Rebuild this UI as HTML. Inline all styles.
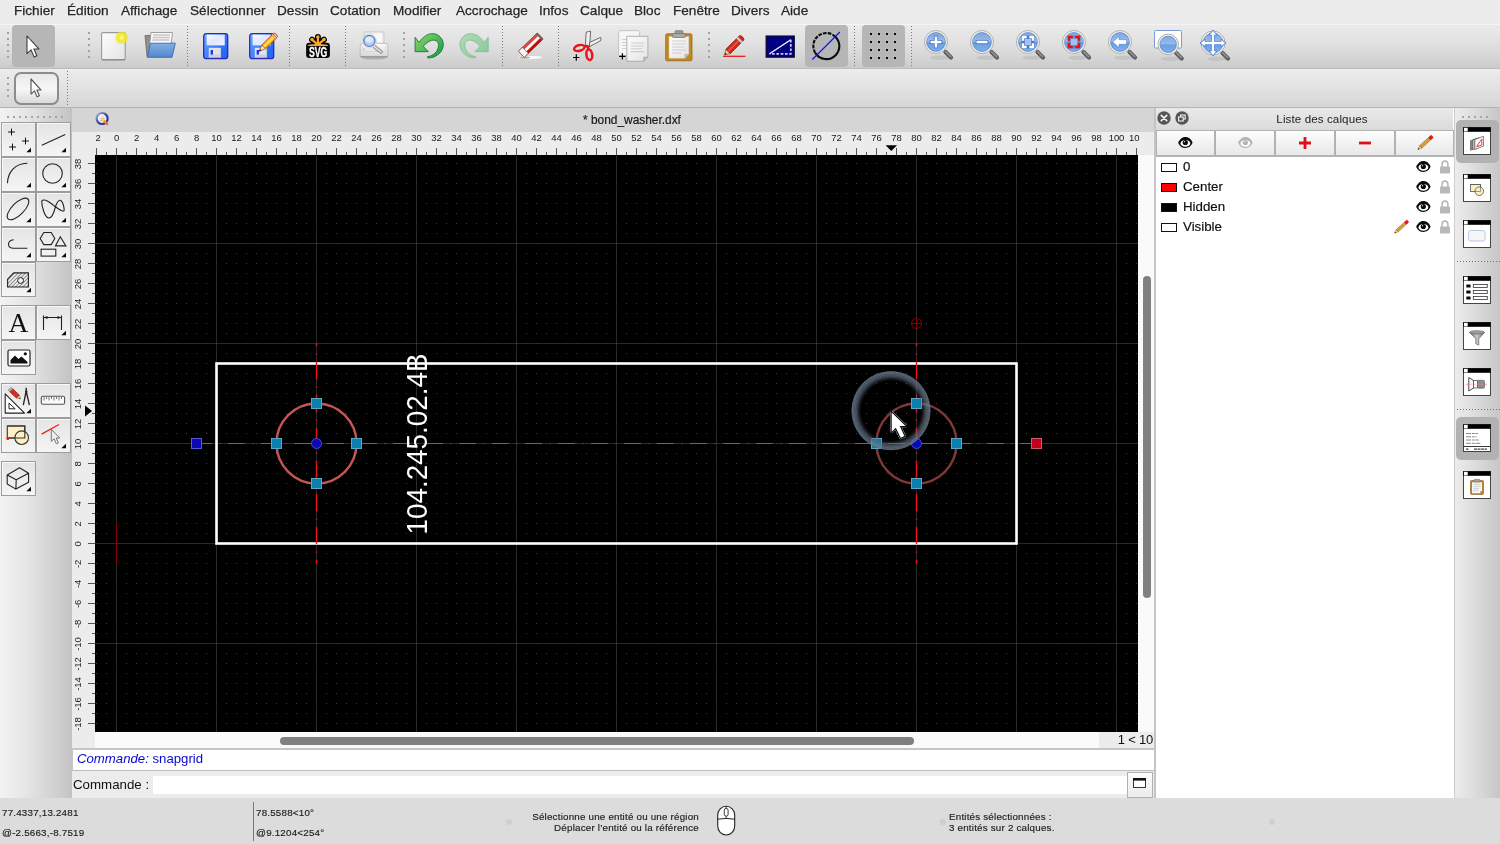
<!DOCTYPE html>
<html><head><meta charset="utf-8"><title>QCAD</title>
<style>
*{box-sizing:border-box;margin:0;padding:0}
html,body{width:1500px;height:844px;overflow:hidden;background:#ececec;font-family:"Liberation Sans",sans-serif;color:#262626}
.abs{position:absolute}
#root{position:absolute;left:0;top:0;width:1500px;height:844px;overflow:hidden;will-change:transform;-webkit-font-smoothing:antialiased}
#menubar{left:0;top:0;width:1500px;height:24px;background:#ececec}
.mi{position:absolute;top:2px;height:18px;line-height:18px;font-size:13.6px;color:#262626;white-space:nowrap;-webkit-text-stroke:0.25px #262626}
#tb1{left:0;top:24px;width:1500px;height:44px;background:linear-gradient(#ebebeb,#e2e2e2 40%,#d4d4d4 80%,#cacaca)}
#tb1b{left:0;top:68px;width:1500px;height:1px;background:#bdbdbd}
#tb2{left:0;top:69px;width:1500px;height:38px;background:linear-gradient(#ececec,#e4e4e4 40%,#d6d6d6)}
#tb2b{left:0;top:107px;width:1500px;height:1px;background:#b4b4b4}
.selbtn{position:absolute;background:#b6b6b6;border-radius:4px}
.vdots{position:absolute;width:1px;background-image:linear-gradient(#7a7a7a 1px,transparent 1px);background-size:1px 3px}
.hdl{position:absolute;width:2px;background-image:linear-gradient(#a2a2a2 2px,transparent 2px);background-size:2px 6px}
#leftp{left:0;top:108px;width:72px;height:690px;background:linear-gradient(90deg,#f3f3f3,#e6e6e6 35%,#cfcfcf 80%,#c2c2c2)}
.tbtn{position:absolute;width:35px;height:35px;background:linear-gradient(#e4e4e4,#ececec 45%,#f5f5f5);border:1px solid #9c9c9c;box-shadow:inset 1px 1px 0 #f8f8f8}
#tabbar{left:72px;top:108px;width:1082px;height:24px;background:#d5d5d5}
#hruler{left:72px;top:132px;width:1082px;height:23px;background:#ececec;overflow:hidden}
#vruler{left:72px;top:155px;width:23px;height:577px;background:#ececec;overflow:hidden}
#canvas{left:95px;top:155px;width:1043px;height:577px;background:#000;overflow:hidden}
#vscroll{left:1138px;top:155px;width:16px;height:577px;background:#fafafa}
#hscroll{left:95px;top:732px;width:1059px;height:16px;background:#fafafa}
#status{left:0;top:798px;width:1500px;height:46px;background:#dcdcdc}
.st{position:absolute;font-size:9.8px;color:#1c1c1c;white-space:nowrap;line-height:12px;letter-spacing:0.2px;-webkit-text-stroke:0.15px #1c1c1c}
#rightp{left:1455px;top:108px;width:45px;height:690px;background:linear-gradient(90deg,#ececec,#dedede 40%,#c6c6c6)}
#layers{left:1156px;top:108px;width:298px;height:690px;background:#fff}

.rl{position:absolute;font-size:9.5px;color:#1a1a1a;line-height:10px;white-space:nowrap;letter-spacing:-0.15px}

.lbtn{position:absolute;top:130px;height:26px;border:1px solid #b2b2b2;background:linear-gradient(#fdfdfd,#f0f0f0 60%,#e9e9e9)}
.ln{position:absolute;left:1183px;font-size:13.3px;color:#111;-webkit-text-stroke:0.2px #111;line-height:18px;height:18px;white-space:nowrap}
</style></head>
<body><div id="root">
<div id="menubar" class="abs">
<span class="mi" style="left:14px">Fichier</span>
<span class="mi" style="left:67px">Édition</span>
<span class="mi" style="left:121px">Affichage</span>
<span class="mi" style="left:190px">Sélectionner</span>
<span class="mi" style="left:277px">Dessin</span>
<span class="mi" style="left:330px">Cotation</span>
<span class="mi" style="left:393px">Modifier</span>
<span class="mi" style="left:456px">Accrochage</span>
<span class="mi" style="left:539px">Infos</span>
<span class="mi" style="left:580px">Calque</span>
<span class="mi" style="left:634px">Bloc</span>
<span class="mi" style="left:673px">Fenêtre</span>
<span class="mi" style="left:731px">Divers</span>
<span class="mi" style="left:781px">Aide</span>
</div>
<div id="tb1" class="abs"></div><div id="tb1b" class="abs"></div><div class="abs" style="left:0;top:24px;width:1500px;height:1px;background:#f5f5f5"></div>
<div id="tb2" class="abs"></div><div id="tb2b" class="abs"></div>
<div class="selbtn" style="left:12px;top:25px;width:43px;height:42px"></div>
<div class="selbtn" style="left:805px;top:25px;width:43px;height:42px"></div>
<div class="selbtn" style="left:862px;top:25px;width:43px;height:42px"></div>
<div class="hdl" style="left:7px;top:32px;height:26px"></div>
<div class="hdl" style="left:88px;top:32px;height:26px"></div>
<div class="hdl" style="left:403px;top:32px;height:26px"></div>
<div class="hdl" style="left:708px;top:32px;height:26px"></div>
<div class="hdl" style="left:7px;top:77px;height:20px"></div>
<div class="vdots" style="left:187px;top:26px;height:40px"></div>
<div class="vdots" style="left:289px;top:26px;height:40px"></div>
<div class="vdots" style="left:345px;top:26px;height:40px"></div>
<div class="vdots" style="left:502px;top:26px;height:40px"></div>
<div class="vdots" style="left:558px;top:26px;height:40px"></div>
<div class="vdots" style="left:854px;top:26px;height:40px"></div>
<div class="vdots" style="left:911px;top:26px;height:40px"></div>
<div class="vdots" style="left:67px;top:71px;height:34px"></div>
<div class="abs" style="left:14px;top:72px;width:45px;height:33px;border:2px solid #8c8c8c;border-radius:7px;background:linear-gradient(#e8e8e8,#f7f7f7 52%,#dadada)"></div>
<div id="leftp" class="abs"></div>
<div id="rightp" class="abs"></div>
<div class="abs" style="left:1454px;top:108px;width:1px;height:690px;background:#cccccc"></div>
<div id="layers" class="abs"></div>
<div class="abs" style="left:1154px;top:108px;width:2px;height:690px;background:#c4c4c4"></div>
<div id="tabbar" class="abs"></div>
<div id="hruler" class="abs"></div>
<div id="vruler" class="abs"></div>
<div id="vscroll" class="abs"></div>
<div id="hscroll" class="abs"></div>
<div id="canvas" class="abs"></div>
<div id="status" class="abs"></div>
<svg class="abs" style="left:95px;top:155px" width="1043" height="577" viewBox="95 155 1043 577">
<defs><pattern id="gd" x="96" y="163" width="10" height="10" patternUnits="userSpaceOnUse"><rect x="0" y="0" width="1" height="1" fill="#3c3c3c"/></pattern></defs>
<rect x="95" y="155" width="1043" height="577" fill="#000"/>
<rect x="116" y="155" width="1" height="577" fill="#282828"/>
<rect x="216" y="155" width="1" height="577" fill="#282828"/>
<rect x="316" y="155" width="1" height="577" fill="#282828"/>
<rect x="416" y="155" width="1" height="577" fill="#282828"/>
<rect x="516" y="155" width="1" height="577" fill="#282828"/>
<rect x="616" y="155" width="1" height="577" fill="#282828"/>
<rect x="716" y="155" width="1" height="577" fill="#282828"/>
<rect x="816" y="155" width="1" height="577" fill="#282828"/>
<rect x="916" y="155" width="1" height="577" fill="#282828"/>
<rect x="1016" y="155" width="1" height="577" fill="#282828"/>
<rect x="1116" y="155" width="1" height="577" fill="#282828"/>
<rect x="95" y="243" width="1043" height="1" fill="#282828"/>
<rect x="95" y="343" width="1043" height="1" fill="#282828"/>
<rect x="95" y="443" width="1043" height="1" fill="#282828"/>
<rect x="95" y="543" width="1043" height="1" fill="#282828"/>
<rect x="95" y="643" width="1043" height="1" fill="#282828"/>
<rect x="95" y="155" width="1043" height="577" fill="url(#gd)"/>
<rect x="96" y="543" width="40" height="1" fill="#8e0000"/><rect x="116" y="523" width="1" height="40" fill="#8e0000"/>
<rect x="216.5" y="363.5" width="800" height="180" fill="none" stroke="#fff" stroke-width="2.6"/>
<path d="M195 443.5H1037" stroke="#a05050" stroke-width="1" stroke-dasharray="17 7.5 1 7.5" fill="none"/>
<path d="M316.5 343V564" stroke="#f01018" stroke-width="1.4" stroke-dasharray="17.5 7.250 1.200 7.050" stroke-dashoffset="14.300" fill="none"/>
<path d="M916.5 343V564" stroke="#f01018" stroke-width="1.4" stroke-dasharray="17.5 7.250 1.200 7.050" stroke-dashoffset="14.300" fill="none"/>
<circle cx="316.5" cy="443.5" r="40" fill="none" stroke="#c65654" stroke-width="2.4"/>
<circle cx="916.5" cy="443.5" r="40" fill="none" stroke="#7e3937" stroke-width="2.4"/>
<text transform="translate(426.5 534.5) rotate(-90)" font-family="Liberation Sans, sans-serif" font-size="29" fill="#fff" textLength="181" lengthAdjust="spacingAndGlyphs">104.245.02.4B</text>
<g stroke="#860000" stroke-width="1" fill="none"><circle cx="916.5" cy="323.5" r="5"/><path d="M911.500 323.500h10M916.500 318.500v10"/></g>
<rect x="311.5" y="398.5" width="10" height="10" fill="#0d7fae" stroke="#5aa8c8" stroke-width="1"/>
<rect x="311.5" y="478.5" width="10" height="10" fill="#0d7fae" stroke="#5aa8c8" stroke-width="1"/>
<rect x="271.5" y="438.5" width="10" height="10" fill="#0d7fae" stroke="#5aa8c8" stroke-width="1"/>
<rect x="351.5" y="438.5" width="10" height="10" fill="#0d7fae" stroke="#5aa8c8" stroke-width="1"/>
<circle cx="316.5" cy="443.5" r="5" fill="#0a0ab4" stroke="#4a4ac8" stroke-width="1"/>
<rect x="911.5" y="398.5" width="10" height="10" fill="#0d7fae" stroke="#5aa8c8" stroke-width="1"/>
<rect x="911.5" y="478.5" width="10" height="10" fill="#0d7fae" stroke="#5aa8c8" stroke-width="1"/>
<rect x="871.5" y="438.5" width="10" height="10" fill="#0d7fae" stroke="#5aa8c8" stroke-width="1"/>
<rect x="951.5" y="438.5" width="10" height="10" fill="#0d7fae" stroke="#5aa8c8" stroke-width="1"/>
<circle cx="916.5" cy="443.5" r="5" fill="#0a0ab4" stroke="#4a4ac8" stroke-width="1"/>
<rect x="191.5" y="438.5" width="10" height="10" fill="#0a0ab4" stroke="#5a5ad0" stroke-width="1"/>
<rect x="1031.5" y="438.5" width="10" height="10" fill="#c2001e" stroke="#d05868" stroke-width="1"/>
<defs><radialGradient id="rg" cx="50%" cy="50%" r="50%"><stop offset="0.74" stop-color="#4a5a6a" stop-opacity="0"/><stop offset="0.80" stop-color="#4a5a6a" stop-opacity="0.3"/><stop offset="0.86" stop-color="#506070" stop-opacity="0.6"/><stop offset="0.92" stop-color="#5a6a7a" stop-opacity="0.7"/><stop offset="0.968" stop-color="#5c6c7e" stop-opacity="0.72"/><stop offset="0.985" stop-color="#566678" stop-opacity="0.65"/><stop offset="1" stop-color="#4a5a6a" stop-opacity="0"/></radialGradient></defs>
<circle cx="891" cy="410.7" r="40" fill="url(#rg)"/>
<circle cx="891" cy="410.7" r="38.7" fill="none" stroke="#a4b4c4" stroke-width="0.500" opacity="0.5"/>
<circle cx="891" cy="410.7" r="37.4" fill="none" stroke="#a4b4c4" stroke-width="0.500" opacity="0.45"/>
<circle cx="891" cy="410.7" r="36" fill="none" stroke="#a4b4c4" stroke-width="0.500" opacity="0.4"/>
<circle cx="891" cy="410.7" r="34.6" fill="none" stroke="#a4b4c4" stroke-width="0.500" opacity="0.3"/>
<circle cx="891" cy="410.7" r="33.2" fill="none" stroke="#a4b4c4" stroke-width="0.500" opacity="0.2"/>
<path d="M891.700 412.600V431.700L895.800 427.700L900.700 437.800L904.400 436.100L899.700 425.900H905.600Z" fill="none" stroke="#c8c8c8" stroke-width="2.900" stroke-linejoin="round"/>
<path d="M891.700 412.600V431.700L895.800 427.700L900.700 437.800L904.400 436.100L899.700 425.900H905.600Z" fill="#fff" stroke="#0a0a0a" stroke-width="2.300" stroke-linejoin="miter"/>
<path d="M891.700 412.600V431.700L895.800 427.700L900.700 437.800L904.400 436.100L899.700 425.900H905.600Z" fill="#fff"/>
</svg>
<svg class="abs" style="left:72px;top:132px" width="1066" height="23" viewBox="72 132 1066 23">
<path d="M96.5 148V155M106.5 152V155M116.5 148V155M126.5 152V155M136.5 148V155M146.5 152V155M156.5 148V155M166.5 152V155M176.5 148V155M186.5 152V155M196.5 148V155M206.5 152V155M216.5 148V155M226.5 152V155M236.5 148V155M246.5 152V155M256.5 148V155M266.5 152V155M276.5 148V155M286.5 152V155M296.5 148V155M306.5 152V155M316.5 148V155M326.5 152V155M336.5 148V155M346.5 152V155M356.5 148V155M366.5 152V155M376.5 148V155M386.5 152V155M396.5 148V155M406.5 152V155M416.5 148V155M426.5 152V155M436.5 148V155M446.5 152V155M456.5 148V155M466.5 152V155M476.5 148V155M486.5 152V155M496.5 148V155M506.5 152V155M516.5 148V155M526.5 152V155M536.5 148V155M546.5 152V155M556.5 148V155M566.5 152V155M576.5 148V155M586.5 152V155M596.5 148V155M606.5 152V155M616.5 148V155M626.5 152V155M636.5 148V155M646.5 152V155M656.5 148V155M666.5 152V155M676.5 148V155M686.5 152V155M696.5 148V155M706.5 152V155M716.5 148V155M726.5 152V155M736.5 148V155M746.5 152V155M756.5 148V155M766.5 152V155M776.5 148V155M786.5 152V155M796.5 148V155M806.5 152V155M816.5 148V155M826.5 152V155M836.5 148V155M846.5 152V155M856.5 148V155M866.5 152V155M876.5 148V155M886.5 152V155M896.5 148V155M906.5 152V155M916.5 148V155M926.5 152V155M936.5 148V155M946.5 152V155M956.5 148V155M966.5 152V155M976.5 148V155M986.5 152V155M996.5 148V155M1006.5 152V155M1016.5 148V155M1026.5 152V155M1036.5 148V155M1046.5 152V155M1056.5 148V155M1066.5 152V155M1076.5 148V155M1086.5 152V155M1096.5 148V155M1106.5 152V155M1116.5 148V155M1126.5 152V155M1136.5 148V155" stroke="#555" stroke-width="1" fill="none"/>
</svg>
<div class="rl" style="left:86.0px;top:132.5px;width:24px;text-align:center">2</div>
<div class="rl" style="left:104.5px;top:132.5px;width:24px;text-align:center">0</div>
<div class="rl" style="left:124.5px;top:132.5px;width:24px;text-align:center">2</div>
<div class="rl" style="left:144.5px;top:132.5px;width:24px;text-align:center">4</div>
<div class="rl" style="left:164.5px;top:132.5px;width:24px;text-align:center">6</div>
<div class="rl" style="left:184.5px;top:132.5px;width:24px;text-align:center">8</div>
<div class="rl" style="left:204.5px;top:132.5px;width:24px;text-align:center">10</div>
<div class="rl" style="left:224.5px;top:132.5px;width:24px;text-align:center">12</div>
<div class="rl" style="left:244.5px;top:132.5px;width:24px;text-align:center">14</div>
<div class="rl" style="left:264.5px;top:132.5px;width:24px;text-align:center">16</div>
<div class="rl" style="left:284.5px;top:132.5px;width:24px;text-align:center">18</div>
<div class="rl" style="left:304.5px;top:132.5px;width:24px;text-align:center">20</div>
<div class="rl" style="left:324.5px;top:132.5px;width:24px;text-align:center">22</div>
<div class="rl" style="left:344.5px;top:132.5px;width:24px;text-align:center">24</div>
<div class="rl" style="left:364.5px;top:132.5px;width:24px;text-align:center">26</div>
<div class="rl" style="left:384.5px;top:132.5px;width:24px;text-align:center">28</div>
<div class="rl" style="left:404.5px;top:132.5px;width:24px;text-align:center">30</div>
<div class="rl" style="left:424.5px;top:132.5px;width:24px;text-align:center">32</div>
<div class="rl" style="left:444.5px;top:132.5px;width:24px;text-align:center">34</div>
<div class="rl" style="left:464.5px;top:132.5px;width:24px;text-align:center">36</div>
<div class="rl" style="left:484.5px;top:132.5px;width:24px;text-align:center">38</div>
<div class="rl" style="left:504.5px;top:132.5px;width:24px;text-align:center">40</div>
<div class="rl" style="left:524.5px;top:132.5px;width:24px;text-align:center">42</div>
<div class="rl" style="left:544.5px;top:132.5px;width:24px;text-align:center">44</div>
<div class="rl" style="left:564.5px;top:132.5px;width:24px;text-align:center">46</div>
<div class="rl" style="left:584.5px;top:132.5px;width:24px;text-align:center">48</div>
<div class="rl" style="left:604.5px;top:132.5px;width:24px;text-align:center">50</div>
<div class="rl" style="left:624.5px;top:132.5px;width:24px;text-align:center">52</div>
<div class="rl" style="left:644.5px;top:132.5px;width:24px;text-align:center">54</div>
<div class="rl" style="left:664.5px;top:132.5px;width:24px;text-align:center">56</div>
<div class="rl" style="left:684.5px;top:132.5px;width:24px;text-align:center">58</div>
<div class="rl" style="left:704.5px;top:132.5px;width:24px;text-align:center">60</div>
<div class="rl" style="left:724.5px;top:132.5px;width:24px;text-align:center">62</div>
<div class="rl" style="left:744.5px;top:132.5px;width:24px;text-align:center">64</div>
<div class="rl" style="left:764.5px;top:132.5px;width:24px;text-align:center">66</div>
<div class="rl" style="left:784.5px;top:132.5px;width:24px;text-align:center">68</div>
<div class="rl" style="left:804.5px;top:132.5px;width:24px;text-align:center">70</div>
<div class="rl" style="left:824.5px;top:132.5px;width:24px;text-align:center">72</div>
<div class="rl" style="left:844.5px;top:132.5px;width:24px;text-align:center">74</div>
<div class="rl" style="left:864.5px;top:132.5px;width:24px;text-align:center">76</div>
<div class="rl" style="left:884.5px;top:132.5px;width:24px;text-align:center">78</div>
<div class="rl" style="left:904.5px;top:132.5px;width:24px;text-align:center">80</div>
<div class="rl" style="left:924.5px;top:132.5px;width:24px;text-align:center">82</div>
<div class="rl" style="left:944.5px;top:132.5px;width:24px;text-align:center">84</div>
<div class="rl" style="left:964.5px;top:132.5px;width:24px;text-align:center">86</div>
<div class="rl" style="left:984.5px;top:132.5px;width:24px;text-align:center">88</div>
<div class="rl" style="left:1004.5px;top:132.5px;width:24px;text-align:center">90</div>
<div class="rl" style="left:1024.5px;top:132.5px;width:24px;text-align:center">92</div>
<div class="rl" style="left:1044.5px;top:132.5px;width:24px;text-align:center">94</div>
<div class="rl" style="left:1064.5px;top:132.5px;width:24px;text-align:center">96</div>
<div class="rl" style="left:1084.5px;top:132.5px;width:24px;text-align:center">98</div>
<div class="rl" style="left:1104.5px;top:132.5px;width:24px;text-align:center">100</div>
<div class="rl" style="left:1129.0px;top:132.5px;width:24px;text-align:left">10</div>
<svg class="abs" style="left:72px;top:155px" width="23" height="577" viewBox="72 155 23 577">
<path d="M88 723.5H95M92 713.5H95M88 703.5H95M92 693.5H95M88 683.5H95M92 673.5H95M88 663.5H95M92 653.5H95M88 643.5H95M92 633.5H95M88 623.5H95M92 613.5H95M88 603.5H95M92 593.5H95M88 583.5H95M92 573.5H95M88 563.5H95M92 553.5H95M88 543.5H95M92 533.5H95M88 523.5H95M92 513.5H95M88 503.5H95M92 493.5H95M88 483.5H95M92 473.5H95M88 463.5H95M92 453.5H95M88 443.5H95M92 433.5H95M88 423.5H95M92 413.5H95M88 403.5H95M92 393.5H95M88 383.5H95M92 373.5H95M88 363.5H95M92 353.5H95M88 343.5H95M92 333.5H95M88 323.5H95M92 313.5H95M88 303.5H95M92 293.5H95M88 283.5H95M92 273.5H95M88 263.5H95M92 253.5H95M88 243.5H95M92 233.5H95M88 223.5H95M92 213.5H95M88 203.5H95M92 193.5H95M88 183.5H95M92 173.5H95M88 163.5H95" stroke="#555" stroke-width="1" fill="none"/>
<path d="M85 405.5L92 411L85 416.5Z" fill="#000"/>
</svg>
<div class="rl" style="left:66px;top:718.5px;width:24px;height:10px;text-align:center;transform:rotate(-90deg)">-18</div>
<div class="rl" style="left:66px;top:698.5px;width:24px;height:10px;text-align:center;transform:rotate(-90deg)">-16</div>
<div class="rl" style="left:66px;top:678.5px;width:24px;height:10px;text-align:center;transform:rotate(-90deg)">-14</div>
<div class="rl" style="left:66px;top:658.5px;width:24px;height:10px;text-align:center;transform:rotate(-90deg)">-12</div>
<div class="rl" style="left:66px;top:638.5px;width:24px;height:10px;text-align:center;transform:rotate(-90deg)">-10</div>
<div class="rl" style="left:66px;top:618.5px;width:24px;height:10px;text-align:center;transform:rotate(-90deg)">-8</div>
<div class="rl" style="left:66px;top:598.5px;width:24px;height:10px;text-align:center;transform:rotate(-90deg)">-6</div>
<div class="rl" style="left:66px;top:578.5px;width:24px;height:10px;text-align:center;transform:rotate(-90deg)">-4</div>
<div class="rl" style="left:66px;top:558.5px;width:24px;height:10px;text-align:center;transform:rotate(-90deg)">-2</div>
<div class="rl" style="left:66px;top:538.5px;width:24px;height:10px;text-align:center;transform:rotate(-90deg)">0</div>
<div class="rl" style="left:66px;top:518.5px;width:24px;height:10px;text-align:center;transform:rotate(-90deg)">2</div>
<div class="rl" style="left:66px;top:498.5px;width:24px;height:10px;text-align:center;transform:rotate(-90deg)">4</div>
<div class="rl" style="left:66px;top:478.5px;width:24px;height:10px;text-align:center;transform:rotate(-90deg)">6</div>
<div class="rl" style="left:66px;top:458.5px;width:24px;height:10px;text-align:center;transform:rotate(-90deg)">8</div>
<div class="rl" style="left:66px;top:438.5px;width:24px;height:10px;text-align:center;transform:rotate(-90deg)">10</div>
<div class="rl" style="left:66px;top:418.5px;width:24px;height:10px;text-align:center;transform:rotate(-90deg)">12</div>
<div class="rl" style="left:66px;top:398.5px;width:24px;height:10px;text-align:center;transform:rotate(-90deg)">14</div>
<div class="rl" style="left:66px;top:378.5px;width:24px;height:10px;text-align:center;transform:rotate(-90deg)">16</div>
<div class="rl" style="left:66px;top:358.5px;width:24px;height:10px;text-align:center;transform:rotate(-90deg)">18</div>
<div class="rl" style="left:66px;top:338.5px;width:24px;height:10px;text-align:center;transform:rotate(-90deg)">20</div>
<div class="rl" style="left:66px;top:318.5px;width:24px;height:10px;text-align:center;transform:rotate(-90deg)">22</div>
<div class="rl" style="left:66px;top:298.5px;width:24px;height:10px;text-align:center;transform:rotate(-90deg)">24</div>
<div class="rl" style="left:66px;top:278.5px;width:24px;height:10px;text-align:center;transform:rotate(-90deg)">26</div>
<div class="rl" style="left:66px;top:258.5px;width:24px;height:10px;text-align:center;transform:rotate(-90deg)">28</div>
<div class="rl" style="left:66px;top:238.5px;width:24px;height:10px;text-align:center;transform:rotate(-90deg)">30</div>
<div class="rl" style="left:66px;top:218.5px;width:24px;height:10px;text-align:center;transform:rotate(-90deg)">32</div>
<div class="rl" style="left:66px;top:198.5px;width:24px;height:10px;text-align:center;transform:rotate(-90deg)">34</div>
<div class="rl" style="left:66px;top:178.5px;width:24px;height:10px;text-align:center;transform:rotate(-90deg)">36</div>
<div class="rl" style="left:66px;top:158.5px;width:24px;height:10px;text-align:center;transform:rotate(-90deg)">38</div>
<svg class="abs" style="left:880px;top:144px" width="20" height="8"><path d="M5.600 1.200H17L11.300 6.900Z" fill="#000"/></svg>
<div class="abs" style="left:1143px;top:276px;width:8px;height:322px;border-radius:4px;background:#808080"></div>
<div class="abs" style="left:280px;top:737px;width:634px;height:8px;border-radius:4px;background:#808080"></div>
<div class="abs" style="left:72px;top:732px;width:23px;height:16px;background:#ececec"></div>
<div class="abs" style="left:1099px;top:732px;width:55px;height:16px;background:#ececec"></div>
<div class="abs" style="left:1099px;top:732px;width:54px;height:16px;line-height:16px;text-align:right;font-size:13px;color:#111;letter-spacing:-0.2px">1 &lt; 10</div>
<div class="abs" style="left:72px;top:748px;width:1082px;height:2px;background:#c6c6c6"></div>
<div class="abs" style="left:73px;top:750px;width:1081px;height:20px;background:#fff"></div>
<div class="abs" style="left:72px;top:750px;width:1px;height:21px;background:#c6c6c6"></div>
<div class="abs" style="left:77px;top:750px;height:17px;line-height:17px;font-size:13.2px;color:#0808d0;white-space:nowrap"><i>Commande:</i> snapgrid</div>
<div class="abs" style="left:72px;top:770px;width:1082px;height:1px;background:#bcbcbc"></div>
<div class="abs" style="left:72px;top:771px;width:1082px;height:27px;background:#ececec"></div>
<div class="abs" style="left:73px;top:776px;height:18px;line-height:18px;font-size:13.3px;color:#111;white-space:nowrap">Commande :</div>
<div class="abs" style="left:153px;top:776px;width:975px;height:18px;background:#fff"></div>
<div class="abs" style="left:1127px;top:772px;width:26px;height:26px;border:1px solid #b0b0b0;background:linear-gradient(#fbfbfb,#ededed)"></div>
<svg class="abs" style="left:1132px;top:777px" width="16" height="14"><rect x="1.500" y="1.500" width="12" height="9" fill="#fff" stroke="#222" stroke-width="0.900"/><rect x="1" y="1" width="13" height="2.600" fill="#111"/></svg>
<div class="st" style="left:2px;top:807px">77.4337,13.2481</div>
<div class="st" style="left:2px;top:827px">@-2.5663,-8.7519</div>
<div class="abs" style="left:253px;top:802px;width:1px;height:39px;background:#787878"></div>
<div class="st" style="left:256px;top:807px">78.5588&lt;10°</div>
<div class="st" style="left:256px;top:827px">@9.1204&lt;254°</div>
<div class="st" style="left:400px;top:811px;width:299px;text-align:right;line-height:11px">Sélectionne une entité ou une région<br>Déplacer l’entité ou la référence</div>
<div class="st" style="left:949px;top:811px;line-height:11px">Entités sélectionnées :<br>3 entités sur 2 calques.</div>
<div class="abs" style="left:506px;top:819px;width:6px;height:6px;border-radius:3px;background:#cfcfcf"></div>
<div class="abs" style="left:940px;top:819px;width:6px;height:6px;border-radius:3px;background:#cfcfcf"></div>
<div class="abs" style="left:1269px;top:819px;width:6px;height:6px;border-radius:3px;background:#cfcfcf"></div>
<svg class="abs" style="left:716px;top:805px" width="22" height="32" viewBox="0 0 22 32"><rect x="1.700" y="1.300" width="17" height="28.700" rx="8.500" ry="9" fill="#fff" stroke="#222" stroke-width="1.100"/><path d="M1.700 14.200Q10.200 12.600 18.700 14.200" stroke="#222" stroke-width="1" fill="none"/><path d="M10.200 1.300V3.400M10.200 11.200V13.400" stroke="#222" stroke-width="0.900"/><rect x="8.300" y="3.400" width="3.800" height="7.800" rx="1.900" fill="#fff" stroke="#222" stroke-width="0.900"/></svg>
<div class="abs" style="left:72px;top:108px;width:1082px;height:24px;background:#d5d5d5"></div>
<div class="abs" style="left:500px;top:113px;width:264px;text-align:center;font-size:11.9px;line-height:15px;color:#1a1a1a;white-space:nowrap;-webkit-text-stroke:0.2px #1a1a1a">* bond_washer.dxf</div>
<svg class="abs" style="left:95px;top:111px" width="16" height="16" viewBox="0 0 16 16"><defs><linearGradient id="gq" x1="0" y1="0" x2="1" y2="1"><stop offset="0" stop-color="#b4c0e0"/><stop offset="0.45" stop-color="#3a4f9c"/><stop offset="1" stop-color="#1c3486"/></linearGradient></defs><circle cx="7.100" cy="7.500" r="5.500" fill="#f2f3f6" stroke="url(#gq)" stroke-width="2.200"/><path d="M7.100 4.200V10.800M3.800 7.500H10.400" stroke="#c0c4cc" stroke-width="0.700"/><path d="M4.500 9.500H7.500" stroke="#e8a0a0" stroke-width="0.700"/><path d="M7.800 5.300L8.400 6.500" stroke="#f0b0b0" stroke-width="0.800"/><path d="M7.500 8.300L11.300 12.100" stroke="#f2a010" stroke-width="2.300" stroke-linecap="round"/><path d="M7.300 8.100L8.300 9.100" stroke="#f8e080" stroke-width="1.600" stroke-linecap="round"/><path d="M11.300 12.100L12.300 13.100" stroke="#e06868" stroke-width="2.300" stroke-linecap="round"/></svg>
<div class="abs" style="left:1156px;top:108px;width:297px;height:23px;background:linear-gradient(#e9e9e9,#dadada)"></div>
<div class="abs" style="left:1156px;top:110.500px;width:297px;text-align:center;padding-left:35px;font-size:11.6px;line-height:15px;color:#222;white-space:nowrap;letter-spacing:0.1px">Liste des calques</div>
<svg class="abs" style="left:1156px;top:110px" width="36" height="16" viewBox="0 0 36 16"><circle cx="8" cy="8" r="6.7" fill="#555"/><path d="M5.3 5.3L10.7 10.7M10.7 5.3L5.3 10.7" stroke="#f2f2f2" stroke-width="1.7" stroke-linecap="round"/><circle cx="26" cy="8" r="6.7" fill="#555"/><rect x="24.6" y="5" width="4.6" height="4" fill="none" stroke="#f2f2f2" stroke-width="1.1"/><rect x="22.6" y="7" width="4.6" height="4" fill="#555" stroke="#f2f2f2" stroke-width="1.1"/></svg>
<div class="lbtn" style="left:1156px;width:59px"></div>
<div class="lbtn" style="left:1215px;width:60px"></div>
<div class="lbtn" style="left:1275px;width:60px"></div>
<div class="lbtn" style="left:1335px;width:60px"></div>
<div class="lbtn" style="left:1395px;width:59px"></div>
<div class="abs" style="left:1156px;top:156px;width:298px;height:1px;background:#b4b4b4"></div>
<svg class="abs" style="left:1177.700px;top:137.200px" width="15" height="12" viewBox="0 0 15 12"><path d="M0.2 5.900C1.800 1.800 4.800 0.100 7.400 0.100C10.200 0.100 13 1.900 14.600 5.600C13 9.600 10.200 11 7.400 11C4.600 11 1.800 9.600 0.200 5.900Z" fill="#0a0a0a"/><ellipse cx="7.400" cy="6.400" rx="4.900" ry="3.300" fill="#fff"/><circle cx="7.300" cy="5.500" r="2.600" fill="#0a0a0a"/><circle cx="6.500" cy="4.700" r="0.650" fill="#fff" opacity="0.800"/></svg>
<svg class="abs" style="left:1237.700px;top:137.200px" width="15" height="12" viewBox="0 0 15 12"><path d="M0.2 5.900C1.800 1.800 4.800 0.100 7.400 0.100C10.200 0.100 13 1.900 14.600 5.600C13 9.600 10.200 11 7.400 11C4.600 11 1.800 9.600 0.200 5.900Z" fill="#b4b4b4"/><ellipse cx="7.400" cy="6.400" rx="4.900" ry="3.300" fill="#fff"/><circle cx="7.300" cy="5.500" r="2.600" fill="#b4b4b4"/><circle cx="6.500" cy="4.700" r="0.650" fill="#fff" opacity="0.800"/></svg>
<svg class="abs" style="left:1298px;top:136px" width="14" height="14"><path d="M7 1V13M1 7H13" stroke="#e0101a" stroke-width="2.800"/></svg>
<svg class="abs" style="left:1358px;top:136px" width="14" height="14"><path d="M1 7H13" stroke="#e0101a" stroke-width="2.800"/></svg>
<svg class="abs" style="left:0;top:0;overflow:visible" width="1" height="1"><g transform="translate(1417.8 149.6) rotate(-42.500) scale(1)"><path d="M0 0L4.200 -1.650V1.650Z" fill="#ecd8a8" stroke="#7a5a14" stroke-width="0.500" stroke-linejoin="round"/><path d="M0 0L1.700 -0.700V0.700Z" fill="#3a2810"/><rect x="4.200" y="-1.650" width="11.800" height="3.300" fill="#dca544" stroke="#8a5e14" stroke-width="0.500"/><path d="M4.200 0H16" stroke="#c08828" stroke-width="0.600"/><rect x="16" y="-1.650" width="3.700" height="3.300" rx="0.800" fill="#f0141e" stroke="#a00a10" stroke-width="0.400"/></g></svg>
<div class="abs" style="left:1161px;top:163px;width:16px;height:9px;background:#fff;border:1px solid #111"></div>
<div class="ln" style="top:158px">0</div>
<svg class="abs" style="left:1415.600px;top:161.1px" width="15" height="12" viewBox="0 0 15 12"><path d="M0.2 5.900C1.800 1.800 4.800 0.100 7.400 0.100C10.200 0.100 13 1.900 14.600 5.600C13 9.600 10.200 11 7.400 11C4.600 11 1.800 9.600 0.200 5.900Z" fill="#0a0a0a"/><ellipse cx="7.400" cy="6.400" rx="4.900" ry="3.300" fill="#fff"/><circle cx="7.300" cy="5.500" r="2.600" fill="#0a0a0a"/><circle cx="6.500" cy="4.700" r="0.650" fill="#fff" opacity="0.800"/></svg>
<svg class="abs" style="left:1439px;top:160px" width="12" height="14" viewBox="0 0 12 14"><path d="M3.100 7V4.200C3.100 -0.200 8.900 -0.200 8.900 4.200V7" fill="none" stroke="#b4b4b4" stroke-width="1.500"/><rect x="1" y="6.5" width="10" height="7" rx="0.8" fill="#b8b8b8"/></svg>
<div class="abs" style="left:1161px;top:183px;width:16px;height:9px;background:#ff0000;border:1px solid #111"></div>
<div class="ln" style="top:178px">Center</div>
<svg class="abs" style="left:1415.600px;top:181.1px" width="15" height="12" viewBox="0 0 15 12"><path d="M0.2 5.900C1.800 1.800 4.800 0.100 7.400 0.100C10.200 0.100 13 1.900 14.600 5.600C13 9.600 10.200 11 7.400 11C4.600 11 1.800 9.600 0.200 5.900Z" fill="#0a0a0a"/><ellipse cx="7.400" cy="6.400" rx="4.900" ry="3.300" fill="#fff"/><circle cx="7.300" cy="5.500" r="2.600" fill="#0a0a0a"/><circle cx="6.500" cy="4.700" r="0.650" fill="#fff" opacity="0.800"/></svg>
<svg class="abs" style="left:1439px;top:180px" width="12" height="14" viewBox="0 0 12 14"><path d="M3.100 7V4.200C3.100 -0.200 8.900 -0.200 8.900 4.200V7" fill="none" stroke="#b4b4b4" stroke-width="1.500"/><rect x="1" y="6.5" width="10" height="7" rx="0.8" fill="#b8b8b8"/></svg>
<div class="abs" style="left:1161px;top:203px;width:16px;height:9px;background:#000;border:1px solid #111"></div>
<div class="ln" style="top:198px">Hidden</div>
<svg class="abs" style="left:1415.600px;top:201.1px" width="15" height="12" viewBox="0 0 15 12"><path d="M0.2 5.900C1.800 1.800 4.800 0.100 7.400 0.100C10.200 0.100 13 1.900 14.600 5.600C13 9.600 10.200 11 7.400 11C4.600 11 1.800 9.600 0.200 5.900Z" fill="#0a0a0a"/><ellipse cx="7.400" cy="6.400" rx="4.900" ry="3.300" fill="#fff"/><circle cx="7.300" cy="5.500" r="2.600" fill="#0a0a0a"/><circle cx="6.500" cy="4.700" r="0.650" fill="#fff" opacity="0.800"/></svg>
<svg class="abs" style="left:1439px;top:200px" width="12" height="14" viewBox="0 0 12 14"><path d="M3.100 7V4.200C3.100 -0.200 8.900 -0.200 8.900 4.200V7" fill="none" stroke="#b4b4b4" stroke-width="1.500"/><rect x="1" y="6.5" width="10" height="7" rx="0.8" fill="#b8b8b8"/></svg>
<div class="abs" style="left:1161px;top:223px;width:16px;height:9px;background:#fff;border:1px solid #111"></div>
<div class="ln" style="top:218px">Visible</div>
<svg class="abs" style="left:1415.600px;top:221.1px" width="15" height="12" viewBox="0 0 15 12"><path d="M0.2 5.900C1.800 1.800 4.800 0.100 7.400 0.100C10.200 0.100 13 1.900 14.600 5.600C13 9.600 10.200 11 7.400 11C4.600 11 1.800 9.600 0.200 5.900Z" fill="#0a0a0a"/><ellipse cx="7.400" cy="6.400" rx="4.900" ry="3.300" fill="#fff"/><circle cx="7.300" cy="5.500" r="2.600" fill="#0a0a0a"/><circle cx="6.500" cy="4.700" r="0.650" fill="#fff" opacity="0.800"/></svg>
<svg class="abs" style="left:1439px;top:220px" width="12" height="14" viewBox="0 0 12 14"><path d="M3.100 7V4.200C3.100 -0.200 8.900 -0.200 8.900 4.200V7" fill="none" stroke="#b4b4b4" stroke-width="1.500"/><rect x="1" y="6.5" width="10" height="7" rx="0.8" fill="#b8b8b8"/></svg>
<svg class="abs" style="left:0;top:0;overflow:visible" width="1" height="1"><g transform="translate(1394.5 233.2) rotate(-42.500) scale(0.92)"><path d="M0 0L4.200 -1.650V1.650Z" fill="#ecd8a8" stroke="#7a5a14" stroke-width="0.500" stroke-linejoin="round"/><path d="M0 0L1.700 -0.700V0.700Z" fill="#3a2810"/><rect x="4.200" y="-1.650" width="11.800" height="3.300" fill="#dca544" stroke="#8a5e14" stroke-width="0.500"/><path d="M4.200 0H16" stroke="#c08828" stroke-width="0.600"/><rect x="16" y="-1.650" width="3.700" height="3.300" rx="0.800" fill="#f0141e" stroke="#a00a10" stroke-width="0.400"/></g></svg>
<div class="abs" style="left:7px;top:116px;width:58px;height:2px;background-image:linear-gradient(90deg,#a4a4a4 2px,transparent 2px);background-size:6px 2px"></div>
<div class="tbtn" style="left:1px;top:122px"></div>
<svg class="abs" style="left:2px;top:122.5px" width="34" height="34" viewBox="0 0 34 34"><path d="M9.500 5.600v6.800M6.100 9h6.800M23.500 14.600v6.800M20.100 18h6.800M10.500 20.600v6.800M7.100 24h6.800" stroke="#111" stroke-width="1" fill="none"/><path d="M29 24.700V29.200H24.300Z" fill="#0a0a0a"/></svg>
<div class="tbtn" style="left:36px;top:122px"></div>
<svg class="abs" style="left:37px;top:122.5px" width="34" height="34" viewBox="0 0 34 34"><path d="M4.800 22.200L28.200 11.400" stroke="#222" stroke-width="1.1" fill="none"/><path d="M29 24.700V29.200H24.300Z" fill="#0a0a0a"/></svg>
<div class="tbtn" style="left:1px;top:157px"></div>
<svg class="abs" style="left:2px;top:157.5px" width="34" height="34" viewBox="0 0 34 34"><path transform="translate(-1 -1.200)" d="M6.5 26C7 15 14 7 26 6.5" stroke="#222" stroke-width="1.1" fill="none" stroke-linecap="round"/><path d="M29 24.700V29.200H24.300Z" fill="#0a0a0a"/></svg>
<div class="tbtn" style="left:36px;top:157px"></div>
<svg class="abs" style="left:37px;top:157.5px" width="34" height="34" viewBox="0 0 34 34"><circle cx="15.500" cy="15.500" r="9.800" stroke="#222" stroke-width="1.1" fill="none"/><path d="M29 24.700V29.200H24.300Z" fill="#0a0a0a"/></svg>
<div class="tbtn" style="left:1px;top:192px"></div>
<svg class="abs" style="left:2px;top:192.5px" width="34" height="34" viewBox="0 0 34 34"><ellipse cx="16" cy="15.900" rx="14" ry="6" transform="rotate(-45 16 15.900)" stroke="#222" stroke-width="1.1" fill="none"/><path d="M29 24.700V29.200H24.300Z" fill="#0a0a0a"/></svg>
<div class="tbtn" style="left:36px;top:192px"></div>
<svg class="abs" style="left:37px;top:192.5px" width="34" height="34" viewBox="0 0 34 34"><path transform="translate(0 -0.500)" d="M4.700 8.600C4.700 14.500 8 25.500 11.900 25.500C15.200 25.500 17.100 19.700 18.400 14.500C19.700 9.900 21.700 7.300 23.700 7.900C26.300 9.200 27.600 17.100 26.900 18.400C25.600 19.700 20.400 15.800 17.800 13.800C13.900 10.500 7.300 5.300 4.700 8.600Z" stroke="#222" stroke-width="1.1" fill="none"/><path d="M29 24.700V29.200H24.300Z" fill="#0a0a0a"/></svg>
<div class="tbtn" style="left:1px;top:227px"></div>
<svg class="abs" style="left:2px;top:227.5px" width="34" height="34" viewBox="0 0 34 34"><path d="M11.700 11.800C8 12 6.300 14.500 6.500 16.500C6.800 19 9 20.300 11.500 20.300H25.400" stroke="#222" stroke-width="1.1" fill="none"/><path d="M29 24.700V29.200H24.300Z" fill="#0a0a0a"/></svg>
<div class="tbtn" style="left:36px;top:227px"></div>
<svg class="abs" style="left:37px;top:227.5px" width="34" height="34" viewBox="0 0 34 34"><path d="M6.800 4.500H14.200L17.800 10.500L14.200 16.600H6.800L3.200 10.500Z" stroke="#222" stroke-width="1.1" fill="none"/><path d="M23.300 8.800L28.900 17.900H18.400Z" stroke="#222" stroke-width="1.1" fill="none"/><rect x="4.100" y="21.200" width="14.700" height="6.900" stroke="#222" stroke-width="1.1" fill="none"/><path d="M29 24.700V29.200H24.300Z" fill="#0a0a0a"/></svg>
<div class="tbtn" style="left:1px;top:262px"></div>
<svg class="abs" style="left:2px;top:262.5px" width="34" height="34" viewBox="0 0 34 34"><defs><pattern id="hp" width="2.600" height="2.600" patternUnits="userSpaceOnUse" patternTransform="rotate(45)"><rect width="0.800" height="2.600" fill="#7a7a7a"/></pattern></defs><path d="M5.600 24V16.200L11.700 9.900H26.400V24Z" fill="url(#hp)" stroke="#222" stroke-width="1.100"/><circle cx="18.600" cy="17.500" r="2.900" fill="#f2f2f2" stroke="#222" stroke-width="1"/><path d="M29 24.700V29.200H24.300Z" fill="#0a0a0a"/></svg>
<div class="tbtn" style="left:1px;top:305px"></div>
<svg class="abs" style="left:2px;top:305.5px" width="34" height="34" viewBox="0 0 34 34"><text x="16.500" y="26.300" text-anchor="middle" font-family="Liberation Serif, serif" font-size="27.500" fill="#111">A</text></svg>
<div class="tbtn" style="left:36px;top:305px"></div>
<svg class="abs" style="left:37px;top:305.5px" width="34" height="34" viewBox="0 0 34 34"><path d="M6.500 9.500V24M24.500 9.500V24M6.500 11.500H24.500" stroke="#222" stroke-width="1.100" fill="none"/><path d="M6.500 11.500L10.500 10V13ZM24.500 11.500L20.500 10V13Z" fill="#222"/><path d="M29 24.700V29.200H24.300Z" fill="#0a0a0a"/></svg>
<div class="tbtn" style="left:1px;top:340px"></div>
<svg class="abs" style="left:2px;top:340.5px" width="34" height="34" viewBox="0 0 34 34"><rect x="6" y="9" width="22" height="16" rx="1.5" fill="#fff" stroke="#222" stroke-width="1.2"/><path d="M8.5 22.5V19L13 14.5L16.5 18L19.5 15.5L25.5 21V22.5Z" fill="#111"/><circle cx="23.3" cy="12.8" r="1.6" fill="#111"/></svg>
<div class="tbtn" style="left:1px;top:383px"></div>
<svg class="abs" style="left:2px;top:383.5px" width="34" height="34" viewBox="0 0 34 34"><path d="M3.200 9.800V29.100H22.500Z" fill="#fff" stroke="#222" stroke-width="1.100" stroke-linejoin="round"/><path d="M7 19.100V24.800H13.200Z" fill="none" stroke="#222" stroke-width="1"/><g transform="translate(18.400 14.900) rotate(-137)"><path d="M0 0L3.600 -2.100V2.100Z" fill="#e8d0a0" stroke="#7a5a14" stroke-width="0.500"/><path d="M0 0L1.300 -0.800V0.800Z" fill="#333"/><rect x="3.600" y="-2.100" width="9" height="4.200" fill="#dc2a20" stroke="#7a1410" stroke-width="0.600"/><rect x="12.600" y="-2.100" width="2.400" height="4.200" fill="#b8b8b8" stroke="#666" stroke-width="0.400"/></g><path d="M24.200 3.800V7" stroke="#222" stroke-width="1.400" fill="none"/><circle cx="24.200" cy="7.600" r="1.200" fill="#222"/><path d="M24 8L21.300 21.200M24.400 8L27.400 21.200" stroke="#222" stroke-width="1.300" fill="none"/><path d="M29 24.700V29.200H24.300Z" fill="#0a0a0a"/></svg>
<div class="tbtn" style="left:36px;top:383px"></div>
<svg class="abs" style="left:37px;top:383.5px" width="34" height="34" viewBox="0 0 34 34"><rect x="4.300" y="12.300" width="23.300" height="8" rx="1.500" fill="#fafafa" stroke="#555" stroke-width="1.100"/><path d="M7 13v3.500M9.500 13v2M12 13v3.500M14.500 13v2M17 13v3.500M19.500 13v2M22 13v3.500M24.500 13v2" stroke="#555" stroke-width="0.800"/></svg>
<div class="tbtn" style="left:1px;top:418px"></div>
<svg class="abs" style="left:2px;top:418.5px" width="34" height="34" viewBox="0 0 34 34"><rect x="5.300" y="7" width="17.500" height="12" fill="#fdf0c4" stroke="#333" stroke-width="1.100"/><circle cx="19.700" cy="18.700" r="6.800" fill="#fdf0c4" stroke="#333" stroke-width="1.100"/><path d="M5.300 7H22.800V19H5.300" fill="none" stroke="#333" stroke-width="1.100"/><circle cx="5.800" cy="19.400" r="1.500" fill="#f01818"/></svg>
<div class="tbtn" style="left:36px;top:418px"></div>
<svg class="abs" style="left:37px;top:418.5px" width="34" height="34" viewBox="0 0 34 34"><path d="M4.600 15.100L22 5.500" stroke="#f02020" stroke-width="1.300" fill="none"/><path d="M14.300 10.300V22.300L17.100 19.800L19.300 24.800L21.400 23.800L19.200 19H22.800Z" fill="#eee" stroke="#777" stroke-width="1"/><path d="M29 24.700V29.200H24.300Z" fill="#0a0a0a"/></svg>
<div class="tbtn" style="left:1px;top:461px"></div>
<svg class="abs" style="left:2px;top:461.5px" width="34" height="34" viewBox="0 0 34 34"><path d="M5.200 13L17.500 5.800L26.600 11.200V20.300L13.900 27.100L5.200 22ZM5.200 13L14.200 17.700L26.600 11.200M14.200 17.700L13.900 27.100" fill="none" stroke="#222" stroke-width="1.100" stroke-linejoin="round"/><path d="M29 24.700V29.200H24.300Z" fill="#0a0a0a"/></svg>
<svg width="0" height="0" style="position:absolute"><defs><linearGradient id="gpaper" x1="0" y1="0" x2="1" y2="1"><stop offset="0" stop-color="#fdfdfd"/><stop offset="1" stop-color="#e4e4e4"/></linearGradient><linearGradient id="gfold" x1="0" y1="0" x2="0" y2="1"><stop offset="0" stop-color="#86b0e2"/><stop offset="1" stop-color="#5088d0"/></linearGradient><linearGradient id="gsave" x1="0" y1="0" x2="1" y2="0.6"><stop offset="0" stop-color="#86b6ff"/><stop offset="0.35" stop-color="#4a8cff"/><stop offset="1" stop-color="#2468f6"/></linearGradient><linearGradient id="glab" x1="0" y1="0" x2="1" y2="1"><stop offset="0" stop-color="#ffffff"/><stop offset="0.5" stop-color="#dfe6ff"/><stop offset="1" stop-color="#f4f6ff"/></linearGradient><linearGradient id="gundo" x1="0" y1="0" x2="1" y2="1"><stop offset="0" stop-color="#96d66e"/><stop offset="0.5" stop-color="#4fb85a"/><stop offset="1" stop-color="#1c963c"/></linearGradient><linearGradient id="gredo" x1="1" y1="0" x2="0" y2="1"><stop offset="0" stop-color="#b4dcb4"/><stop offset="1" stop-color="#86c69a"/></linearGradient><linearGradient id="glens" x1="0" y1="0" x2="0" y2="1"><stop offset="0" stop-color="#7fa6de"/><stop offset="0.48" stop-color="#9dbce8"/><stop offset="0.52" stop-color="#6a9ce0"/><stop offset="1" stop-color="#7cb2f0"/></linearGradient><radialGradient id="gglow"><stop offset="0" stop-color="#ffffd0"/><stop offset="0.35" stop-color="#f4ee30"/><stop offset="0.8" stop-color="#eee820" stop-opacity="0.75"/><stop offset="1" stop-color="#e8e020" stop-opacity="0"/></radialGradient><linearGradient id="gprn" x1="0" y1="0" x2="0" y2="1"><stop offset="0" stop-color="#fafafa"/><stop offset="0.6" stop-color="#e6e6e6"/><stop offset="1" stop-color="#d2d2d2"/></linearGradient></defs></svg>
<svg class="abs" style="left:27px;top:35.5px;overflow:visible" width="16" height="27" viewBox="0 0 16 27"><g transform="scale(0.82)"><path d="M0 0V21.500L5 17L8.600 25.500L12 24L8.400 15.800H14.500Z" fill="#fff" stroke="#3a3a3a" stroke-width="1.3" stroke-linejoin="round"/></g></svg>
<svg class="abs" style="left:31.3px;top:79px;overflow:visible" width="14" height="20" viewBox="0 0 14 20"><g transform="scale(0.700)"><path d="M0 0V21.500L5 17L8.600 25.500L12 24L8.400 15.800H14.500Z" fill="#fdfdfd" stroke="#555" stroke-width="1.6" stroke-linejoin="round"/></g></svg>
<svg class="abs" style="left:100px;top:31px;overflow:visible" width="28" height="31" viewBox="0 0 28 31"><rect x="1.6" y="1.6" width="23.600" height="27.200" rx="1.500" fill="url(#gpaper)" stroke="#9a9a9a" stroke-width="1.100"/><path d="M2 28.800H25" stroke="#888" stroke-width="1.2"/><circle cx="21.600" cy="6.700" r="6.800" fill="url(#gglow)"/></svg>
<svg class="abs" style="left:143px;top:31px;overflow:visible" width="34" height="28" viewBox="0 0 34 28"><path d="M2 4.500H8L9.500 6.500H24V25.500H4Z" fill="#8e8e8e" stroke="#6a6a6a" stroke-width="0.8"/><path d="M8 1.500H29.500L28 14H6.500Z" fill="#fafafa" stroke="#8a8a8a" stroke-width="0.8"/><path d="M10 4H27M9.700 6.500H26.700M9.400 9H26.400" stroke="#c4c4c4" stroke-width="1.300"/><path d="M7.500 12.200H32.300L29 26.300H4.300Z" fill="url(#gfold)" stroke="#3468b4" stroke-width="0.9" stroke-linejoin="round"/></svg>
<svg class="abs" style="left:203px;top:33px;overflow:visible" width="26" height="27" viewBox="0 0 26 27"><rect x="0.7" y="0.7" width="24" height="25" rx="2.500" fill="url(#gsave)" stroke="#2a2ab4" stroke-width="1.300"/><rect x="3.700" y="1.600" width="18" height="10.800" fill="url(#glab)"/><rect x="5.800" y="14.800" width="12" height="9.600" fill="#e2e2ea"/><rect x="5.800" y="21.500" width="12" height="2.900" fill="#cfcfdc"/><rect x="7.600" y="17" width="2.400" height="4.600" fill="#1c3ce0"/></svg>
<svg class="abs" style="left:248.9px;top:33px;overflow:visible" width="26" height="27" viewBox="0 0 26 27"><rect x="0.7" y="0.7" width="24" height="25" rx="2.500" fill="url(#gsave)" stroke="#2a2ab4" stroke-width="1.300"/><rect x="3.700" y="1.600" width="18" height="10.800" fill="url(#glab)"/><rect x="5.800" y="14.800" width="12" height="9.600" fill="#e2e2ea"/><rect x="5.800" y="21.500" width="12" height="2.900" fill="#cfcfdc"/><rect x="7.600" y="17" width="2.400" height="4.600" fill="#1c3ce0"/><g transform="translate(25.7 3) rotate(135.500)"><rect x="0" y="-2.700" width="15.500" height="5.400" fill="#ffb400" stroke="#c03a10" stroke-width="0.800"/><rect x="0" y="-1" width="15.500" height="2" fill="#ffe070"/><path d="M0 -2.700H-1.500Q-3.300 0 -1.500 2.700H0Z" fill="#f4c8b0" stroke="#c8301a" stroke-width="0.800"/><rect x="0" y="-2.700" width="1.600" height="5.400" fill="#d8d8d8" stroke="#c03a10" stroke-width="0.400"/><path d="M15.500 -2.700L21.800 0L15.500 2.700Z" fill="#f6e2c0" stroke="#c03a10" stroke-width="0.700" stroke-linejoin="round"/><path d="M19.600 -0.900L22.200 0L19.600 0.900Z" fill="#202020"/></g></svg>
<svg class="abs" style="left:305px;top:33px;overflow:visible" width="28" height="26" viewBox="0 0 28 26"><rect x="1.100" y="9.700" width="23.800" height="15.200" rx="3.200" fill="#050505"/><g stroke="#050505" stroke-width="6" stroke-linecap="round" fill="none"><path d="M12.900 11.500V4.100"/><path d="M12.900 11.500L7.100 6.700"/><path d="M12.900 11.500L18.900 6.700"/></g><g stroke="#f9a82e" stroke-linecap="round" fill="none"><path d="M12.900 11.600V4.200" stroke-width="2.200"/><path d="M12.900 11.600L7.200 6.800" stroke-width="2.200"/><path d="M12.900 11.600L18.800 6.800" stroke-width="2.200"/></g><g fill="#f9a82e"><circle cx="12.900" cy="4" r="1.750"/><circle cx="7" cy="6.600" r="1.750"/><circle cx="19" cy="6.600" r="1.750"/></g><path d="M2.700 12.900C2.900 11.900 4 11.500 5 11.400L9.500 11.200L12.900 8.500L16.500 11.200L21 11.400C22 11.500 23.100 11.900 23.300 12.900Z" fill="#f9a82e"/><text x="13.100" y="24.100" text-anchor="middle" font-family="Liberation Sans, sans-serif" font-weight="bold" font-size="14.200" fill="#fff" stroke="#fff" stroke-width="0.300" textLength="18.400" lengthAdjust="spacingAndGlyphs">SVG</text></svg>
<svg class="abs" style="left:359px;top:31px;overflow:visible" width="30" height="29" viewBox="0 0 30 29"><rect x="5.200" y="0.900" width="19.700" height="14" rx="0.800" fill="#ededed" stroke="#c2c2c2" stroke-width="0.8"/><rect x="14" y="2.500" width="9" height="10" fill="#f8f8f8"/><ellipse cx="15" cy="27.300" rx="11.500" ry="1.200" fill="#909090" opacity="0.55"/><path d="M1.200 15.300Q1.200 12.300 4.200 12.300H25.900Q28.900 12.300 28.900 15.300V24.800Q28.900 26.500 27.200 26.500H2.900Q1.200 26.500 1.200 24.800Z" fill="url(#gprn)" stroke="#b2b2b2" stroke-width="0.8"/><path d="M3.400 14.500V19.500Q3.400 20.500 4.400 20.500H25.600Q26.600 20.500 26.600 19.500V14.500" fill="none" stroke="#d2d2d2" stroke-width="0.9"/><path d="M1.800 25.800H28.300" stroke="#8e8e8e" stroke-width="1.200"/><circle cx="5.200" cy="18.200" r="0.500" fill="#777"/><path d="M15.400 15.700L22 20.900" stroke="#8c8c8c" stroke-width="3.700" stroke-linecap="round"/><path d="M15.400 15.700L22 20.900" stroke="#dedede" stroke-width="1.800" stroke-linecap="round"/><circle cx="10.400" cy="9.900" r="7.100" fill="#eeeeee" stroke="#c8c8c8" stroke-width="0.500"/><circle cx="10.400" cy="9.900" r="5.600" fill="#b8cce6" stroke="#4c82cc" stroke-width="1.200"/><ellipse cx="10" cy="8.800" rx="4" ry="3" fill="#e2ecf8" opacity="0.9"/></svg>
<svg class="abs" style="left:414.5px;top:33px;overflow:visible" width="30" height="26" viewBox="0 0 30 26"><path d="M0.1 4.300V18.700H13.300L8.200 13.300C10.500 11 12.500 9 15.100 7.900C17 7.100 18.500 7 19.900 7.300C22.500 8 23.800 10 23.500 12.400C23.200 16 22 18.500 19.900 20.200C18 22 15.500 23.300 12.500 23.700L12.900 24.900C16 24.900 18.500 24.400 20.500 23.200C24 21.200 26.300 19 27.100 16.600C28 14.500 28.500 12.500 28.300 10.600C28 8 27 5.800 25.300 4C23.500 2 21 0.900 18.700 0.700C16 0.500 13.500 1.200 11.500 2.200C8.500 4 6 6.500 4 9.400Z" fill="url(#gundo)" stroke="#167a30" stroke-width="0.9" stroke-linejoin="round"/></svg>
<svg class="abs" style="left:459.2px;top:33px;overflow:visible" width="30" height="26" viewBox="0 0 30 26"><g transform="translate(29.300 0) scale(-1 1)"><path d="M0.1 4.300V18.700H13.300L8.200 13.300C10.500 11 12.500 9 15.100 7.900C17 7.100 18.500 7 19.900 7.300C22.500 8 23.800 10 23.500 12.400C23.200 16 22 18.500 19.900 20.200C18 22 15.500 23.300 12.500 23.700L12.900 24.900C16 24.900 18.500 24.400 20.500 23.200C24 21.200 26.300 19 27.100 16.600C28 14.500 28.500 12.500 28.300 10.600C28 8 27 5.800 25.300 4C23.500 2 21 0.900 18.700 0.700C16 0.500 13.500 1.200 11.500 2.200C8.500 4 6 6.500 4 9.400Z" fill="url(#gredo)" stroke="#84c094" stroke-width="0.9" stroke-linejoin="round"/></g></svg>
<svg class="abs" style="left:517px;top:32px;overflow:visible" width="28" height="28" viewBox="0 0 28 28"><ellipse cx="13.500" cy="25.400" rx="11.500" ry="1.500" fill="#fff" opacity="0.9"/><ellipse cx="8" cy="25.500" rx="5" ry="1.100" fill="#905858" opacity="0.55"/><g transform="translate(4.300 22.300) rotate(-44)"><rect x="0" y="-4.250" width="26.400" height="8.500" rx="0.800" fill="#cc0a0a" stroke="#6a1010" stroke-width="0.600"/><rect x="5.600" y="-4.250" width="20" height="2.800" fill="#e04848"/><rect x="5.600" y="-1.450" width="20" height="2.900" fill="#fdfdfd"/><rect x="0" y="-4.250" width="5.800" height="8.500" rx="0.600" fill="#f4f4f4" stroke="#7a4040" stroke-width="0.600"/><rect x="24.600" y="-4.250" width="1.800" height="8.500" fill="#6a6a6a"/></g></svg>
<svg class="abs" style="left:572px;top:30px;overflow:visible" width="30" height="32" viewBox="0 0 30 32"><path d="M13.400 15.500L14.200 2.200L18.600 1.100L17.600 17Z" fill="#f2f2f2" stroke="#4a4a4a" stroke-width="0.800" stroke-linejoin="round"/><path d="M17.700 12.400L28.600 7.400L29 10.400L17.300 16.800Z" fill="#f2f2f2" stroke="#4a4a4a" stroke-width="0.800" stroke-linejoin="round"/><ellipse cx="7.300" cy="18" rx="5.300" ry="2.800" transform="rotate(-15 7.300 18)" fill="none" stroke="#e8141c" stroke-width="2.500"/><ellipse cx="17.300" cy="24.700" rx="2.900" ry="5.300" transform="rotate(-8 17.300 24.700)" fill="none" stroke="#e8141c" stroke-width="2.500"/><path d="M11.800 16.300L15.500 16L16.500 19.600" stroke="#e8141c" stroke-width="2.600" fill="none" stroke-linejoin="round"/><path d="M1.100 27.500H7.500M4.300 24.300V30.700" stroke="#000" stroke-width="1.200"/></svg>
<svg class="abs" style="left:618px;top:30px;overflow:visible" width="32" height="33" viewBox="0 0 32 33"><rect x="0.600" y="0.600" width="21" height="25" rx="1" fill="#f6f6f6" stroke="#c0c0c0" stroke-width="0.9"/><path d="M4 9.500H9M4 12.500H9M4 15.500H9M4 18.500H9" stroke="#d0d0d0" stroke-width="1.100"/><path d="M8.800 6.300H29.900V27L25.500 31.300H8.800Z" fill="url(#gpaper)" stroke="#a8a8a8" stroke-width="0.9" stroke-linejoin="round"/><path d="M29.900 27H25.500V31.300Z" fill="#bcbcbc" stroke="#a0a0a0" stroke-width="0.5"/><path d="M12.800 13H26M12.800 16H26M12.800 18.800H24M12.800 21.600H26" stroke="#cdcdcd" stroke-width="1.100"/><path d="M1.200 26.300H7.600M4.400 23.200V29.500" stroke="#000" stroke-width="1.200"/></svg>
<svg class="abs" style="left:665px;top:29.5px;overflow:visible" width="28" height="32" viewBox="0 0 28 32"><rect x="0.700" y="3.800" width="26.300" height="27" rx="1.500" fill="#c4861e" stroke="#9a6414" stroke-width="0.8"/><path d="M4 6.500H23.800V24L20 28.200H4Z" fill="url(#gpaper)" stroke="#c8c8c8" stroke-width="0.500"/><path d="M23.800 24H19.500V28.200Z" fill="#b8b8b8"/><path d="M7 11H21M7 14H21M7 17H19M7 20H21M7 23H16" stroke="#cdcdcd" stroke-width="1.100"/><rect x="10" y="0.700" width="8" height="3.500" rx="1" fill="#9a9c94" stroke="#6e706a" stroke-width="0.7"/><rect x="7.300" y="3.500" width="13.400" height="4" rx="1.500" fill="#a8aaa2" stroke="#6e706a" stroke-width="0.7"/></svg>
<svg class="abs" style="left:722px;top:33px;overflow:visible" width="26" height="26" viewBox="0 0 26 26"><path d="M1 23.300H23.500" stroke="#f01010" stroke-width="1.200"/><g transform="translate(2.500 22) rotate(-45) scale(0.930)"><path d="M0 0L5.600 -3.300V3.300Z" fill="#ecc89a" stroke="#7a4a14" stroke-width="0.7" stroke-linejoin="round"/><path d="M0 0L2.200 -1.200V1.200Z" fill="#302018"/><rect x="5.600" y="-3.300" width="16" height="6.600" fill="#dc2418" stroke="#7a1408" stroke-width="0.8"/><rect x="5.600" y="-0.800" width="16" height="1.500" fill="#f05a48"/><rect x="21.600" y="-3.300" width="2.800" height="6.600" fill="#d0d0d0" stroke="#8a8a8a" stroke-width="0.5"/><path d="M24.400 -3.300H26.500Q28.600 0 26.500 3.300H24.400Z" fill="#e02818" stroke="#7a1408" stroke-width="0.700"/></g></svg>
<svg class="abs" style="left:765px;top:35px;overflow:visible" width="31" height="23" viewBox="0 0 31 23"><rect x="1.100" y="1" width="28.200" height="21.200" fill="#000080" stroke="#0a0a28" stroke-width="1.100"/><path d="M4.500 18.800L25.800 4.800" stroke="#fff" stroke-width="1.300"/><path d="M25.800 4.800V18.800H4.500" stroke="#ccccf2" stroke-width="1.700" stroke-dasharray="2.600 1.700" fill="none"/></svg>
<svg class="abs" style="left:811px;top:31px;overflow:visible" width="30" height="30" viewBox="0 0 30 30"><path d="M21.800 3.800A13 13 0 1 1 4.200 21.800" fill="none" stroke="#0a0a0a" stroke-width="2.100"/><path d="M4.200 21.800A13 13 0 0 1 21.800 3.800" fill="none" stroke="#0a0a0a" stroke-width="2.100" stroke-dasharray="3.600 1.200"/><path d="M1.300 28.500L28.900 1" stroke="#1010f0" stroke-width="1.200"/></svg>
<svg class="abs" style="left:869.7px;top:33px;overflow:visible" width="26" height="26" viewBox="0 0 26 26"><rect x="0" y="0" width="2" height="2" fill="#0a0a0a"/><rect x="0" y="8" width="2" height="2" fill="#0a0a0a"/><rect x="0" y="16" width="2" height="2" fill="#0a0a0a"/><rect x="0" y="24" width="2" height="2" fill="#0a0a0a"/><rect x="8" y="0" width="2" height="2" fill="#0a0a0a"/><rect x="8" y="8" width="2" height="2" fill="#0a0a0a"/><rect x="8" y="16" width="2" height="2" fill="#0a0a0a"/><rect x="8" y="24" width="2" height="2" fill="#0a0a0a"/><rect x="16" y="0" width="2" height="2" fill="#0a0a0a"/><rect x="16" y="8" width="2" height="2" fill="#0a0a0a"/><rect x="16" y="16" width="2" height="2" fill="#0a0a0a"/><rect x="16" y="24" width="2" height="2" fill="#0a0a0a"/><rect x="24" y="0" width="2" height="2" fill="#0a0a0a"/><rect x="24" y="8" width="2" height="2" fill="#0a0a0a"/><rect x="24" y="16" width="2" height="2" fill="#0a0a0a"/><rect x="24" y="24" width="2" height="2" fill="#0a0a0a"/></svg>
<svg class="abs" style="left:921.8px;top:27.9px;overflow:visible" width="34" height="34" viewBox="0 0 34 34"><ellipse cx="18" cy="29.8" rx="10" ry="2.200" fill="#9a9a9a" opacity="0.280"/><path d="M23.5 24L29 29.5" stroke="#5c5c5c" stroke-width="4.200" stroke-linecap="round"/><path d="M23.6 23.6L28.7 28.7" stroke="#8e8e8e" stroke-width="1.800" stroke-linecap="round"/><circle cx="14" cy="14" r="11.5" fill="#f1f1ec" stroke="#a9a99e" stroke-width="0.900"/><circle cx="14" cy="14" r="9.4" fill="url(#glens)" stroke="#5a88cc" stroke-width="0.800"/><path d="M7.7 14H20.3M14 7.7V20.3" stroke="#3f6fc0" stroke-width="4.200"/><path d="M8.5 14H19.5M14 8.5V19.5" stroke="#fff" stroke-width="2.600"/></svg>
<svg class="abs" style="left:968px;top:27.9px;overflow:visible" width="34" height="34" viewBox="0 0 34 34"><ellipse cx="18" cy="29.8" rx="10" ry="2.200" fill="#9a9a9a" opacity="0.280"/><path d="M23.5 24L29 29.5" stroke="#5c5c5c" stroke-width="4.200" stroke-linecap="round"/><path d="M23.6 23.6L28.7 28.7" stroke="#8e8e8e" stroke-width="1.800" stroke-linecap="round"/><circle cx="14" cy="14" r="11.5" fill="#f1f1ec" stroke="#a9a99e" stroke-width="0.900"/><circle cx="14" cy="14" r="9.4" fill="url(#glens)" stroke="#5a88cc" stroke-width="0.800"/><path d="M7.7 14H20.3" stroke="#3f6fc0" stroke-width="4.200"/><path d="M8.5 14H19.5" stroke="#fff" stroke-width="2.600"/></svg>
<svg class="abs" style="left:1014.2px;top:27.9px;overflow:visible" width="34" height="34" viewBox="0 0 34 34"><ellipse cx="18" cy="29.8" rx="10" ry="2.200" fill="#9a9a9a" opacity="0.280"/><path d="M23.5 24L29 29.5" stroke="#5c5c5c" stroke-width="4.200" stroke-linecap="round"/><path d="M23.6 23.6L28.7 28.7" stroke="#8e8e8e" stroke-width="1.800" stroke-linecap="round"/><circle cx="14" cy="14" r="11.5" fill="#f1f1ec" stroke="#a9a99e" stroke-width="0.900"/><circle cx="14" cy="14" r="9.4" fill="url(#glens)" stroke="#5a88cc" stroke-width="0.800"/><rect x="7.5" y="7.5" width="13" height="13" rx="0.800" fill="#3f6ec6" opacity="0.850"/><path d="M9 12.7V9H12.7M15.3 9H19V12.7M19 15.3V19H15.3M12.7 19H9V15.3" stroke="#fff" stroke-width="2.3" fill="none"/><rect x="10.8" y="10.8" width="6.400" height="6.400" fill="#a4c2ec"/></svg>
<svg class="abs" style="left:1060.1px;top:27.9px;overflow:visible" width="34" height="34" viewBox="0 0 34 34"><ellipse cx="18" cy="29.8" rx="10" ry="2.200" fill="#9a9a9a" opacity="0.280"/><path d="M23.5 24L29 29.5" stroke="#5c5c5c" stroke-width="4.200" stroke-linecap="round"/><path d="M23.6 23.6L28.7 28.7" stroke="#8e8e8e" stroke-width="1.800" stroke-linecap="round"/><circle cx="14" cy="14" r="11.5" fill="#f1f1ec" stroke="#a9a99e" stroke-width="0.900"/><circle cx="14" cy="14" r="9.4" fill="url(#glens)" stroke="#5a88cc" stroke-width="0.800"/><rect x="7.5" y="7.5" width="13" height="13" rx="0.800" fill="#3f6ec6" opacity="0.550"/><path d="M9 12.7V9H12.7M15.3 9H19V12.7M19 15.3V19H15.3M12.7 19H9V15.3" stroke="#f80808" stroke-width="2.4" fill="none"/><rect x="10.8" y="10.8" width="6.400" height="6.400" fill="#a4c2ec"/></svg>
<svg class="abs" style="left:1106.3px;top:27.9px;overflow:visible" width="34" height="34" viewBox="0 0 34 34"><ellipse cx="18" cy="29.8" rx="10" ry="2.200" fill="#9a9a9a" opacity="0.280"/><path d="M23.5 24L29 29.5" stroke="#5c5c5c" stroke-width="4.200" stroke-linecap="round"/><path d="M23.6 23.6L28.7 28.7" stroke="#8e8e8e" stroke-width="1.800" stroke-linecap="round"/><circle cx="14" cy="14" r="11.5" fill="#f1f1ec" stroke="#a9a99e" stroke-width="0.900"/><circle cx="14" cy="14" r="9.4" fill="url(#glens)" stroke="#5a88cc" stroke-width="0.800"/><path d="M6.7 14L13 8.5V11.7H20.6V16.3H13V19.5Z" fill="#fff" stroke="#4878c8" stroke-width="0.500"/></svg>
<svg class="abs" style="left:1153px;top:29px;overflow:visible" width="34" height="34" viewBox="0 0 34 34"><rect x="1.500" y="1.500" width="27" height="17.500" rx="1" fill="#fdfdfd" stroke="#6f8fd4" stroke-width="0.9"/><ellipse cx="17.7" cy="29.700000000000003" rx="10" ry="2.200" fill="#9a9a9a" opacity="0.280"/><path d="M23.2 23.9L28.7 29.4" stroke="#5c5c5c" stroke-width="4.200" stroke-linecap="round"/><path d="M23.299999999999997 23.5L28.4 28.6" stroke="#8e8e8e" stroke-width="1.800" stroke-linecap="round"/><circle cx="15.2" cy="15.4" r="10.3" fill="#f1f1ec" stroke="#a9a99e" stroke-width="0.900"/><circle cx="15.2" cy="15.4" r="8.200000000000001" fill="url(#glens)" stroke="#5a88cc" stroke-width="0.800"/><ellipse cx="15.200" cy="11.800" rx="6.500" ry="3.500" fill="#8ab6f0" opacity="0.5"/></svg>
<svg class="abs" style="left:1197.1px;top:27px;overflow:visible" width="36" height="36" viewBox="0 0 36 36"><ellipse cx="20" cy="31.8" rx="10" ry="2.200" fill="#9a9a9a" opacity="0.280"/><path d="M25.5 26L31 31.5" stroke="#5c5c5c" stroke-width="4.200" stroke-linecap="round"/><path d="M25.6 25.6L30.7 30.7" stroke="#8e8e8e" stroke-width="1.800" stroke-linecap="round"/><circle cx="16" cy="16" r="12" fill="#f1f1ec" stroke="#a9a99e" stroke-width="0.900"/><circle cx="16" cy="16" r="9.9" fill="url(#glens)" stroke="#5a88cc" stroke-width="0.800"/><path d="M16 7V25M7 16H25" stroke="#4a80dc" stroke-width="3.800"/><path d="M16 3.5999999999999996L12.8 7.699999999999999H19.2ZM16 28.4L12.8 24.3H19.2ZM3.5999999999999996 16L7.699999999999999 12.8V19.2ZM28.4 16L24.3 12.8V19.2Z" fill="#4a80dc" stroke="#4a80dc" stroke-width="1.500" stroke-linejoin="round"/><path d="M16 7V25M7 16H25" stroke="#fff" stroke-width="2.300"/><path d="M16 3.8000000000000007L12.9 7.699999999999999H19.1ZM16 28.2L12.9 24.3H19.1ZM3.8000000000000007 16L7.699999999999999 12.9V19.1ZM28.2 16L24.3 12.9V19.1Z" fill="#fff"/></svg>
<div class="abs" style="left:1462px;top:116px;width:28px;height:2px;background-image:linear-gradient(90deg,#a4a4a4 2px,transparent 2px);background-size:6px 2px"></div>
<div class="abs" style="left:1456px;top:120px;width:43px;height:42.500px;border-radius:5px;background:#b2b2b2"></div>
<div class="abs" style="left:1456px;top:417px;width:43px;height:43px;border-radius:5px;background:#b2b2b2"></div>
<div class="abs" style="left:1457px;top:261px;width:43px;height:1px;background-image:linear-gradient(90deg,#6e6e6e 1px,transparent 1px);background-size:3px 1px"></div>
<div class="abs" style="left:1457px;top:409px;width:43px;height:1px;background-image:linear-gradient(90deg,#6e6e6e 1px,transparent 1px);background-size:3px 1px"></div>
<svg class="abs" style="left:1463px;top:127px" width="28" height="28" viewBox="0 0 28 28"><rect x="0.500" y="0.500" width="27" height="27" fill="#fff" stroke="#333" stroke-width="0.900"/><rect x="0.300" y="0.300" width="27.400" height="4.500" fill="#000"/><rect x="1" y="0.800" width="3.700" height="3.600" fill="#fff"/><g transform="translate(7.500 8.800) scale(0.960 0.900)"><path d="M0 5.500L7 2.500V13L0 16Z" fill="#8c8c8c" stroke="#444" stroke-width="0.600"/><path d="M2 5L9 2V12.500L2 15.500Z" fill="#b8b8b8" stroke="#444" stroke-width="0.600"/><path d="M4.500 4.200L13.500 0.500V11.500L4.500 15.200Z" fill="#fafafa" stroke="#444" stroke-width="0.700"/><path d="M6.300 12.200L11.800 3.500V10.200Z" fill="none" stroke="#f03030" stroke-width="1"/></g></svg>
<svg class="abs" style="left:1463px;top:174px" width="28" height="28" viewBox="0 0 28 28"><rect x="0.500" y="0.500" width="27" height="27" fill="#fff" stroke="#333" stroke-width="0.900"/><rect x="0.300" y="0.300" width="27.400" height="4.500" fill="#000"/><rect x="1" y="0.800" width="3.700" height="3.600" fill="#fff"/><rect x="7.500" y="10.500" width="10" height="7" fill="#fdf0c0" stroke="#555" stroke-width="0.800"/><circle cx="16.300" cy="17.200" r="4.300" fill="#fdf0c0" stroke="#555" stroke-width="0.800"/><path d="M7.500 10.500H17.500V17.500H12" fill="none" stroke="#555" stroke-width="0.700" opacity="0.800"/></svg>
<svg class="abs" style="left:1463px;top:220px" width="28" height="28" viewBox="0 0 28 28"><rect x="0.500" y="0.500" width="27" height="27" fill="#fff" stroke="#333" stroke-width="0.900"/><rect x="0.300" y="0.300" width="27.400" height="4.500" fill="#000"/><rect x="1" y="0.800" width="3.700" height="3.600" fill="#fff"/><rect x="5.500" y="10.500" width="16.500" height="10.500" rx="2.200" fill="#f6f6f6" stroke="#b8c8e4" stroke-width="1"/></svg>
<svg class="abs" style="left:1463px;top:276px" width="28" height="28" viewBox="0 0 28 28"><rect x="0.500" y="0.500" width="27" height="27" fill="#fff" stroke="#333" stroke-width="0.900"/><rect x="0.300" y="0.300" width="27.400" height="4.500" fill="#000"/><rect x="1" y="0.800" width="3.700" height="3.600" fill="#fff"/><rect x="3.300" y="8.4" width="4.300" height="3.200" rx="0.600" fill="#0a0a0a"/><rect x="10.300" y="8.5" width="14" height="3" fill="#fff" stroke="#333" stroke-width="0.800"/><rect x="3.300" y="14.4" width="4.300" height="3.200" rx="0.600" fill="#0a0a0a"/><rect x="10.300" y="14.5" width="14" height="3" fill="#fff" stroke="#333" stroke-width="0.800"/><rect x="3.300" y="20.4" width="4.300" height="3.200" rx="0.600" fill="#0a0a0a"/><rect x="10.300" y="20.5" width="14" height="3" fill="#fff" stroke="#333" stroke-width="0.800"/></svg>
<svg class="abs" style="left:1463px;top:322px" width="28" height="28" viewBox="0 0 28 28"><rect x="0.500" y="0.500" width="27" height="27" fill="#fff" stroke="#333" stroke-width="0.900"/><rect x="0.300" y="0.300" width="27.400" height="4.500" fill="#000"/><rect x="1" y="0.800" width="3.700" height="3.600" fill="#fff"/><defs><linearGradient id="gfun" x1="0" y1="0" x2="1" y2="0"><stop offset="0" stop-color="#6e6e6e"/><stop offset="0.5" stop-color="#c8c8c8"/><stop offset="1" stop-color="#6a6a6a"/></linearGradient></defs><path d="M6.500 10.500H21.500L15.800 16.800V23.200L12.800 21.800V16.800Z" fill="url(#gfun)" stroke="#555" stroke-width="0.600"/><ellipse cx="14" cy="10.300" rx="7.500" ry="1.600" fill="#a0a0a0" stroke="#5a5a5a" stroke-width="0.600"/></svg>
<svg class="abs" style="left:1463px;top:368px" width="28" height="28" viewBox="0 0 28 28"><rect x="0.500" y="0.500" width="27" height="27" fill="#fff" stroke="#333" stroke-width="0.900"/><rect x="0.300" y="0.300" width="27.400" height="4.500" fill="#000"/><rect x="1" y="0.800" width="3.700" height="3.600" fill="#fff"/><path d="M3.500 16.300H24" stroke="#f08080" stroke-width="0.900" stroke-dasharray="2.500 1"/><path d="M5.800 9.500V23L10.500 20V12.500Z" fill="#fafafa" stroke="#333" stroke-width="0.900" stroke-linejoin="round"/><rect x="10.500" y="12.500" width="4" height="7.500" fill="#fff" stroke="#444" stroke-width="0.700"/><rect x="14.500" y="12.300" width="7" height="7.900" rx="1.200" fill="#8e8e8e" stroke="#5a5a5a" stroke-width="0.600"/><path d="M3.500 16.300H24" stroke="#f09090" stroke-width="0.700" stroke-dasharray="2.500 1" opacity="0.700"/></svg>
<svg class="abs" style="left:1463px;top:424px" width="28" height="28" viewBox="0 0 28 28"><rect x="0.500" y="0.500" width="27" height="27" fill="#fff" stroke="#333" stroke-width="0.900"/><rect x="0.300" y="0.300" width="27.400" height="4.500" fill="#000"/><rect x="1" y="0.800" width="3.700" height="3.600" fill="#fff"/><path d="M0.500 22.500H27.500" stroke="#222" stroke-width="0.900"/><g stroke="#8a8a8a" stroke-width="1"><path d="M3 9.500H15M3 12.800H13.500M3 16H16M3 19.300H17.500" stroke-dasharray="5 0.800 3 0.600"/></g><path d="M3 25.200H5.500M11 25.200H24" stroke="#444" stroke-width="1.300" stroke-dasharray="3 0.500"/></svg>
<svg class="abs" style="left:1463px;top:471px" width="28" height="28" viewBox="0 0 28 28"><rect x="0.500" y="0.500" width="27" height="27" fill="#fff" stroke="#333" stroke-width="0.900"/><rect x="0.300" y="0.300" width="27.400" height="4.500" fill="#000"/><rect x="1" y="0.800" width="3.700" height="3.600" fill="#fff"/><rect x="7.500" y="9.500" width="13" height="14" rx="1" fill="#b9832e" stroke="#8e5e18" stroke-width="0.600"/><path d="M9 11.200H19V20L17 22.200H9Z" fill="#f4f4f4"/><path d="M19 20H17V22.200Z" fill="#aaa"/><path d="M10.500 13.500H17.500M10.500 15.500H17.500M10.500 17.500H16M10.500 19.500H15" stroke="#c8c8c8" stroke-width="0.800"/><rect x="11" y="8.300" width="6" height="2.800" rx="0.800" fill="#a0a29a" stroke="#6e706a" stroke-width="0.500"/></svg>
</div></body></html>
